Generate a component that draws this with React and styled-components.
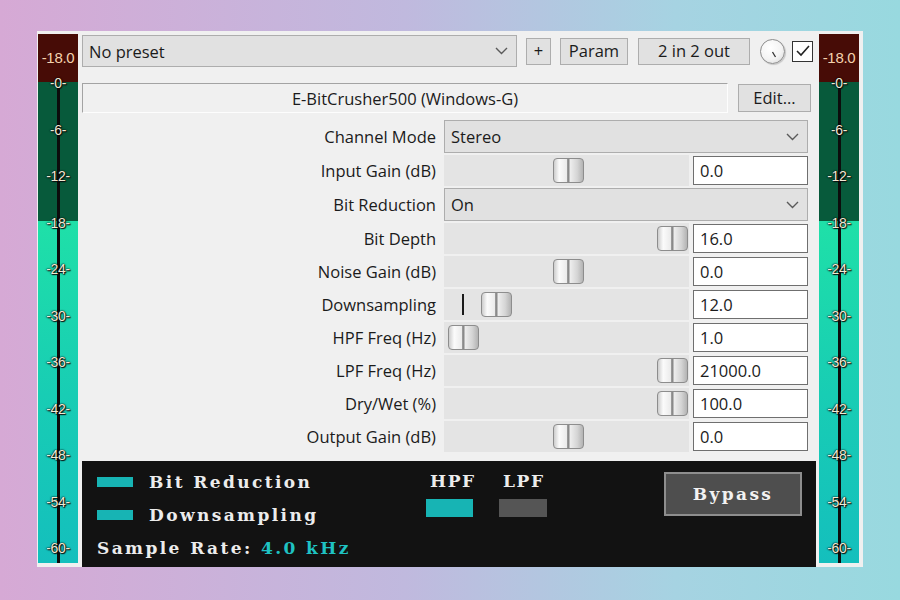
import React from 'react';
import styled, { createGlobalStyle } from 'styled-components';

const GlobalStyle = createGlobalStyle`
  html, body {
    margin: 0;
    width: 900px;
    height: 600px;
    overflow: hidden;
  }
  body {
    background: linear-gradient(90deg, #d6a9d5 0%, #c0b9de 45%, #a6d3e2 75%, #98d9df 100%);
    font-family: "Open Sans", "Liberation Sans", sans-serif;
  }
`;

const Page = styled.div`
  padding: 31px 0 0 37px;
`;

const Window = styled.div`
  width: 826px;
  height: 536px;
  box-sizing: border-box;
  padding: 3px 4px 0 1px;
  background: #f0f0f0;
  display: grid;
  grid-template-columns: 40px 1fr 40px;
  column-gap: 4px;
`;

/* ---------- level meters ---------- */

const MeterBar = styled.div`
  position: relative;
  height: 529px;
  background: linear-gradient(
    180deg,
    #470c06 0px,
    #470c06 48px,
    #075a3b 48px,
    #075a3b 187px,
    #1fe0a8 187px,
    #18cdb4 360px,
    #14bfbd 529px
  );
`;

const MeterLine = styled.div`
  position: absolute;
  left: 19px;
  top: 54px;
  bottom: 0;
  width: 3px;
  background: #0c0c0c;
`;

const PeakLabel = styled.div`
  position: absolute;
  top: 15px;
  left: 0;
  right: 0;
  text-align: center;
  font: 15px "Liberation Sans", Arial, sans-serif;
  color: #f4d3ad;
  letter-spacing: -0.3px;
`;

const Tick = styled.div`
  position: absolute;
  left: 0;
  right: 0;
  height: 16px;
  margin-top: -8px;
  line-height: 16px;
  text-align: center;
  font: 14px "Liberation Sans", Arial, sans-serif;
  color: #f1ead6;
  letter-spacing: -0.4px;
  text-shadow: 0 0 1px #000, 0 0 2px #000, 1px 1px 1px #111;
`;

const Meter = () => (
  <MeterBar>
    <MeterLine />
    <PeakLabel>-18.0</PeakLabel>
    {[0, 6, 12, 18, 24, 30, 36, 42, 48, 54, 60].map((db) => (
      <Tick key={db} style={{ top: 49 + db * 7.75 }}>
        -{db}-
      </Tick>
    ))}
  </MeterBar>
);

/* ---------- header ---------- */

const Main = styled.div`
  display: flex;
  flex-direction: column;
  min-width: 0;
`;

const TopRow = styled.div`
  display: flex;
  align-items: center;
  height: 32px;
  margin-top: 1px;
`;

const Combo = styled.div`
  display: flex;
  align-items: center;
  justify-content: space-between;
  box-sizing: border-box;
  width: ${(p) => p.$width || 'auto'};
  height: ${(p) => p.$height || 32}px;
  padding: 0 8px 0 6px;
  background: #e1e1e1;
  border: 1px solid #adadad;
  font-size: 16.5px;
  color: #1b1b1b;
`;

const Chevron = () => (
  <svg width="13" height="8" viewBox="0 0 13 8">
    <polyline points="1,1 6.5,6.5 12,1" fill="none" stroke="#5a5a5a" strokeWidth="1.4" />
  </svg>
);

const Button = styled.button`
  box-sizing: border-box;
  width: ${(p) => p.$width}px;
  height: ${(p) => p.$height || 27}px;
  margin-left: ${(p) => p.$gap || 0}px;
  padding: 0;
  background: #e1e1e1;
  border: 1px solid #adadad;
  font-family: "Open Sans", "Liberation Sans", sans-serif;
  font-size: 16.5px;
  color: #1b1b1b;
  line-height: 1;
`;

const Knob = styled.div`
  width: 25px;
  height: 25px;
  margin-left: 10px;
  border-radius: 50%;
  box-sizing: border-box;
  border: 1px solid #8c8c8c;
  background: radial-gradient(circle at 40% 35%, #ffffff 0%, #f4f4f4 55%, #d4d4d4 100%);
  box-shadow: 1px 1px 1px rgba(0, 0, 0, 0.18);
  display: flex;
  align-items: center;
  justify-content: center;
`;

const CheckBox = styled.div`
  width: 21px;
  height: 21px;
  margin-left: 7px;
  box-sizing: border-box;
  border: 1.5px solid #333;
  background: #fff;
  display: flex;
  align-items: center;
  justify-content: center;
`;

const TitleRow = styled.div`
  display: flex;
  align-items: center;
  margin-top: 16px;
  height: 30px;
`;

const TitleBox = styled.div`
  width: 646px;
  height: 30px;
  box-sizing: border-box;
  border-top: 1.5px solid #a3a3a3;
  border-left: 1.5px solid #a3a3a3;
  border-bottom: 1px solid #fdfdfd;
  border-right: 1px solid #fdfdfd;
  display: flex;
  align-items: center;
  justify-content: center;
  font-size: 16.5px;
  color: #1b1b1b;
`;

/* ---------- parameter rows ---------- */

const ParamGrid = styled.div`
  display: grid;
  grid-template-columns: 354px 364px;
  column-gap: 8px;
  row-gap: 2px;
  margin-top: 7px;
`;

const Label = styled.div`
  display: flex;
  align-items: center;
  justify-content: flex-end;
  height: ${(p) => (p.$tall ? 33 : 31)}px;
  font-size: 16.5px;
  color: #1b1b1b;
  white-space: nowrap;
`;

const SliderCell = styled.div`
  display: flex;
  align-items: center;
  gap: 4px;
  height: 31px;
`;

const Track = styled.div`
  position: relative;
  flex: 1;
  height: 31px;
  background: #e4e4e4;
`;

const Thumb = styled.div`
  position: absolute;
  top: 3px;
  width: 31px;
  height: 25px;
  box-sizing: border-box;
  border: 1px solid #8d8d8d;
  border-radius: 4px;
  background: linear-gradient(
    90deg,
    #cdcdcd 0%,
    #fbfbfb 18%,
    #ebebeb 44%,
    #8a8a8a 47%,
    #8a8a8a 52%,
    #eeeeee 55%,
    #d5d5d5 80%,
    #b3b3b3 100%
  );
`;

const Marker = styled.div`
  position: absolute;
  top: 5px;
  width: 2px;
  height: 21px;
  background: #1a1a1a;
`;

const ValueBox = styled.div`
  width: 115px;
  height: 29px;
  box-sizing: border-box;
  padding-left: 6px;
  display: flex;
  align-items: center;
  background: #fff;
  border: 1px solid #6f6f6f;
  font-size: 16.5px;
  color: #1b1b1b;
`;

/* ---------- status panel ---------- */

const Panel = styled.div`
  margin-top: auto;
  height: 106px;
  box-sizing: border-box;
  margin-right: -1px;
  padding: 10px 14px 0 15px;
  background: #121212;
  display: flex;
  align-items: flex-start;
  font-family: "DejaVu Serif", "Liberation Serif", serif;
  font-weight: bold;
  font-size: 17px;
  letter-spacing: 2.4px;
  color: #ececec;
`;

const StatusList = styled.div`
  width: 329px;
  display: flex;
  flex-direction: column;
  gap: 11px;
`;

const StatusRow = styled.div`
  display: flex;
  align-items: center;
  height: 22px;
  white-space: nowrap;
`;

const Led = styled.div`
  width: ${(p) => p.$w}px;
  height: ${(p) => p.$h}px;
  margin-right: ${(p) => p.$mr || 0}px;
  background: ${(p) => (p.$on ? '#17b4b4' : '#555555')};
`;

const Accent = styled.span`
  color: #1fc2c2;
`;

const FilterGroup = styled.div`
  display: flex;
  gap: 26px;
`;

const Filter = styled.div`
  width: 47px;
  display: flex;
  flex-direction: column;
  align-items: flex-start;
  gap: 8px;
  span {
    height: 20px;
    line-height: 20px;
    padding-left: 4px;
    letter-spacing: 1.6px;
    white-space: nowrap;
  }
`;

const Bypass = styled.div`
  margin-left: auto;
  margin-top: 1px;
  width: 138px;
  height: 44px;
  box-sizing: border-box;
  border: 2px solid #8e8e8e;
  background: #4e4e4e;
  display: flex;
  align-items: center;
  justify-content: center;
  color: #f2f2f2;
`;

const rows = [
  { label: 'Channel Mode', select: 'Stereo' },
  { label: 'Input Gain (dB)', frac: 0.5, value: '0.0' },
  { label: 'Bit Reduction', select: 'On' },
  { label: 'Bit Depth', frac: 1, value: '16.0' },
  { label: 'Noise Gain (dB)', frac: 0.5, value: '0.0' },
  { label: 'Downsampling', frac: 0.158, value: '12.0', marker: 18 },
  { label: 'HPF Freq (Hz)', frac: 0, value: '1.0' },
  { label: 'LPF Freq (Hz)', frac: 1, value: '21000.0' },
  { label: 'Dry/Wet (%)', frac: 1, value: '100.0' },
  { label: 'Output Gain (dB)', frac: 0.5, value: '0.0' },
];

export default function App() {
  return (
    <>
      <GlobalStyle />
      <Page>
        <Window>
          <Meter />
          <Main>
            <TopRow>
              <Combo $width="435px">
                <span>No preset</span>
                <Chevron />
              </Combo>
              <Button $width={25} $gap={9}>+</Button>
              <Button $width={68} $gap={9}>Param</Button>
              <Button $width={112} $gap={10}>2 in 2 out</Button>
              <Knob>
                <svg width="23" height="23" viewBox="0 0 23 23">
                  <line x1="11.5" y1="12" x2="14.5" y2="17" stroke="#333" strokeWidth="1.3" />
                </svg>
              </Knob>
              <CheckBox>
                <svg width="16" height="14" viewBox="0 0 16 14">
                  <polyline points="2,7 6,11 14,2" fill="none" stroke="#222" strokeWidth="1.6" />
                </svg>
              </CheckBox>
            </TopRow>

            <TitleRow>
              <TitleBox>E-BitCrusher500 (Windows-G)</TitleBox>
              <Button $width={73} $height={28} $gap={10}>Edit...</Button>
            </TitleRow>

            <ParamGrid>
              {rows.map((r) => (
                <React.Fragment key={r.label}>
                  <Label $tall={!!r.select}>{r.label}</Label>
                  {r.select ? (
                    <Combo $height={33}>
                      <span>{r.select}</span>
                      <Chevron />
                    </Combo>
                  ) : (
                    <SliderCell>
                      <Track>
                        {r.marker && <Marker style={{ left: r.marker }} />}
                        <Thumb style={{ left: 4 + r.frac * 209 }} />
                      </Track>
                      <ValueBox>{r.value}</ValueBox>
                    </SliderCell>
                  )}
                </React.Fragment>
              ))}
            </ParamGrid>

            <Panel>
              <StatusList>
                <StatusRow>
                  <Led $on $w={36} $h={10} $mr={16} />
                  Bit Reduction
                </StatusRow>
                <StatusRow>
                  <Led $on $w={36} $h={10} $mr={16} />
                  Downsampling
                </StatusRow>
                <StatusRow>
                  Sample Rate: <Accent>&nbsp;4.0 kHz</Accent>
                </StatusRow>
              </StatusList>
              <FilterGroup>
                <Filter>
                  <span>HPF</span>
                  <Led $on $w={47} $h={18} />
                </Filter>
                <Filter>
                  <span>LPF</span>
                  <Led $w={48} $h={18} />
                </Filter>
              </FilterGroup>
              <Bypass>Bypass</Bypass>
            </Panel>
          </Main>
          <Meter />
        </Window>
      </Page>
    </>
  );
}
